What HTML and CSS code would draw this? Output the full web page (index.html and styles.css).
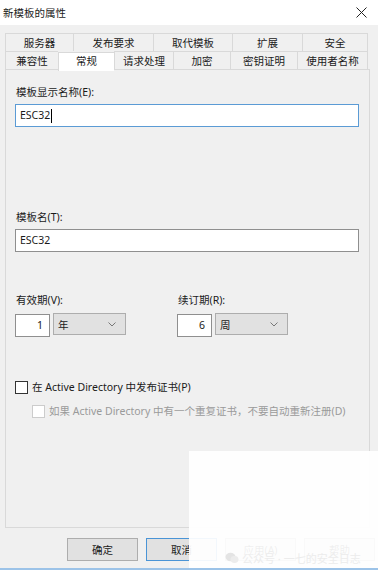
FILE: index.html
```html
<!DOCTYPE html>
<html lang="zh-CN">
<head>
  <meta charset="UTF-8" />
  <title>新模板的属性</title>
  <link rel="stylesheet" href="styles.css">
</head>
<body>
  <div class="window">
    <div class="titlebar">
      <span class="title">新模板的属性</span>
      <svg class="close" width="11" height="11" viewBox="0 0 11 11">
        <path d="M0.5 0.5 L10.5 10.5 M10.5 0.5 L0.5 10.5" stroke="#222" stroke-width="1" fill="none"/>
      </svg>
    </div>

    <div class="dialog">
      <div class="tabs">
        <div class="tab-row">
          <div class="tab w68">服务器</div>
          <div class="tab w80">发布要求</div>
          <div class="tab w79">取代模板</div>
          <div class="tab w70">扩展</div>
          <div class="tab w66">安全</div>
        </div>
        <div class="tab-row">
          <div class="tab w53">兼容性</div>
          <div class="tab w56 active">常规</div>
          <div class="tab w59">请求处理</div>
          <div class="tab w57">加密</div>
          <div class="tab w67">密钥证明</div>
          <div class="tab w71">使用者名称</div>
        </div>
      </div>

      <div class="panel">
        <label class="field-label">模板显示名称(E):</label>
        <div class="textbox focused">ESC32<span class="caret"></span></div>

        <label class="field-label second">模板名(T):</label>
        <div class="textbox">ESC32</div>

        <div class="periods">
          <div class="period">
            <label class="field-label">有效期(V):</label>
            <div class="period-inputs">
              <div class="numbox">1</div>
              <div class="select">
                <span>年</span>
                <svg width="8" height="5" viewBox="0 0 8 5"><path d="M0.5 0.5 L4 4 L7.5 0.5" stroke="#777" fill="none"/></svg>
              </div>
            </div>
          </div>
          <div class="period">
            <label class="field-label">续订期(R):</label>
            <div class="period-inputs">
              <div class="numbox">6</div>
              <div class="select">
                <span>周</span>
                <svg width="8" height="5" viewBox="0 0 8 5"><path d="M0.5 0.5 L4 4 L7.5 0.5" stroke="#777" fill="none"/></svg>
              </div>
            </div>
          </div>
        </div>

        <div class="check">
          <span class="box"></span>
          <span>在 Active Directory 中发布证书(P)</span>
        </div>
        <div class="check sub disabled">
          <span class="box"></span>
          <span>如果 Active Directory 中有一个重复证书，不要自动重新注册(D)</span>
        </div>
      </div>

      <div class="buttons">
        <div class="btn">确定</div>
        <div class="btn default">取消</div>
        <div class="btn">应用(A)</div>
        <div class="btn">帮助</div>
      </div>
    </div>

    <div class="watermark">
      <div class="wm-text">
        <svg width="14" height="12" viewBox="0 0 14 12">
          <ellipse cx="5.5" cy="5" rx="5" ry="4.2" fill="#e4e4e4"/>
          <ellipse cx="9.5" cy="7.5" rx="4" ry="3.4" fill="#ececec"/>
        </svg>
        <span>公众号 · 一七的安全日志</span>
      </div>
    </div>
  </div>
</body>
</html>
```

FILE: styles.css
```css
* {
  margin: 0;
  padding: 0;
  box-sizing: border-box;
}

body {
  width: 378px;
  height: 570px;
  overflow: hidden;
  background: #f0f0f0;
  font-family: "Noto Sans", "Noto Sans CJK SC", sans-serif;
  font-size: 10.5px;
  color: #1a1a1a;
}

.window {
  position: relative;
  height: 570px;
  border-bottom: 2px solid #9cc3e8;
}

.titlebar {
  height: 25px;
  background: #fff;
  display: flex;
  align-items: center;
  justify-content: space-between;
  padding: 0 11px 0 3px;
}

.title {
  font-size: 10.5px;
}

.dialog {
  padding: 8px 0 0 5px;
}

/* tabs */
.tabs {
  display: flex;
  flex-direction: column;
}

.tab-row {
  display: flex;
  height: 18px;
}

.tab {
  border: 1px solid #d9d9d9;
  border-right: none;
  border-bottom: none;
  display: flex;
  align-items: center;
  justify-content: center;
  line-height: 16px;
}

.tab-row .tab:last-child {
  border-right: 1px solid #d9d9d9;
}

.tab.active {
  background: #fff;
  height: 19px;
  margin-top: 1px;
  align-items: flex-start;
  position: relative;
  z-index: 1;
}

.w53 { width: 53px; }
.w56 { width: 56px; }
.w57 { width: 57px; }
.w59 { width: 59px; }
.w66 { width: 66px; }
.w67 { width: 67px; }
.w68 { width: 68px; }
.w70 { width: 70px; }
.w71 { width: 71px; }
.w79 { width: 79px; }
.w80 { width: 80px; }

/* panel */
.panel {
  width: 365px;
  height: 459px;
  border: 1px solid #d9d9d9;
  padding: 14px 0 0 9px;
  display: flex;
  flex-direction: column;
  align-items: flex-start;
}

.field-label {
  display: block;
  line-height: 16px;
  margin-left: 1px;
}

.field-label.second {
  margin-top: 82px;
}

.textbox {
  width: 344px;
  height: 23px;
  margin-top: 4px;
  background: #fff;
  border: 1px solid #8f8f8f;
  padding: 0 4px;
  line-height: 21px;
  display: flex;
  align-items: center;
}

.textbox.focused {
  border-color: #5b9bd5;
}

.caret {
  width: 1px;
  height: 14px;
  background: #000;
  margin-left: 1px;
}

.periods {
  display: flex;
  gap: 51px;
  margin-top: 40px;
}

.period-inputs {
  display: flex;
  align-items: flex-start;
  gap: 3px;
  margin-top: 6px;
}

.numbox {
  width: 35px;
  height: 23px;
  background: #fff;
  border: 1px solid #8f8f8f;
  text-align: right;
  padding-right: 6px;
  line-height: 21px;
}

.select {
  width: 73px;
  height: 22px;
  margin-top: -1px;
  background: #e1e1e1;
  border: 1px solid #adadad;
  display: flex;
  align-items: center;
  justify-content: space-between;
  padding: 0 9px 0 4px;
}

.check {
  display: flex;
  align-items: center;
  gap: 4px;
  margin-top: 42px;
  line-height: 16px;
  white-space: nowrap;
}

.check .box {
  width: 13px;
  height: 13px;
  background: #fff;
  border: 1px solid #333;
}

.check.sub {
  margin-top: 8px;
  margin-left: 17px;
}

.check.disabled {
  color: #9a9a9a;
}

.check.disabled .box {
  border-color: #cccccc;
}

/* bottom buttons */
.buttons {
  display: flex;
  gap: 8px;
  padding: 10px 0 0 62px;
}

.btn {
  width: 71px;
  height: 23px;
  background: #e1e1e1;
  border: 1px solid #adadad;
  display: flex;
  align-items: center;
  justify-content: center;
}

.btn.default {
  border-color: #4a94d6;
}

/* watermark block */
.watermark {
  position: absolute;
  left: 189px;
  top: 451px;
  right: 0;
  bottom: 0;
  background: rgba(255, 255, 255, 0.93);
}

.wm-text {
  position: absolute;
  left: 36px;
  top: 99px;
  display: flex;
  align-items: center;
  gap: 3px;
  color: #ececec;
  font-size: 11px;
}
```
